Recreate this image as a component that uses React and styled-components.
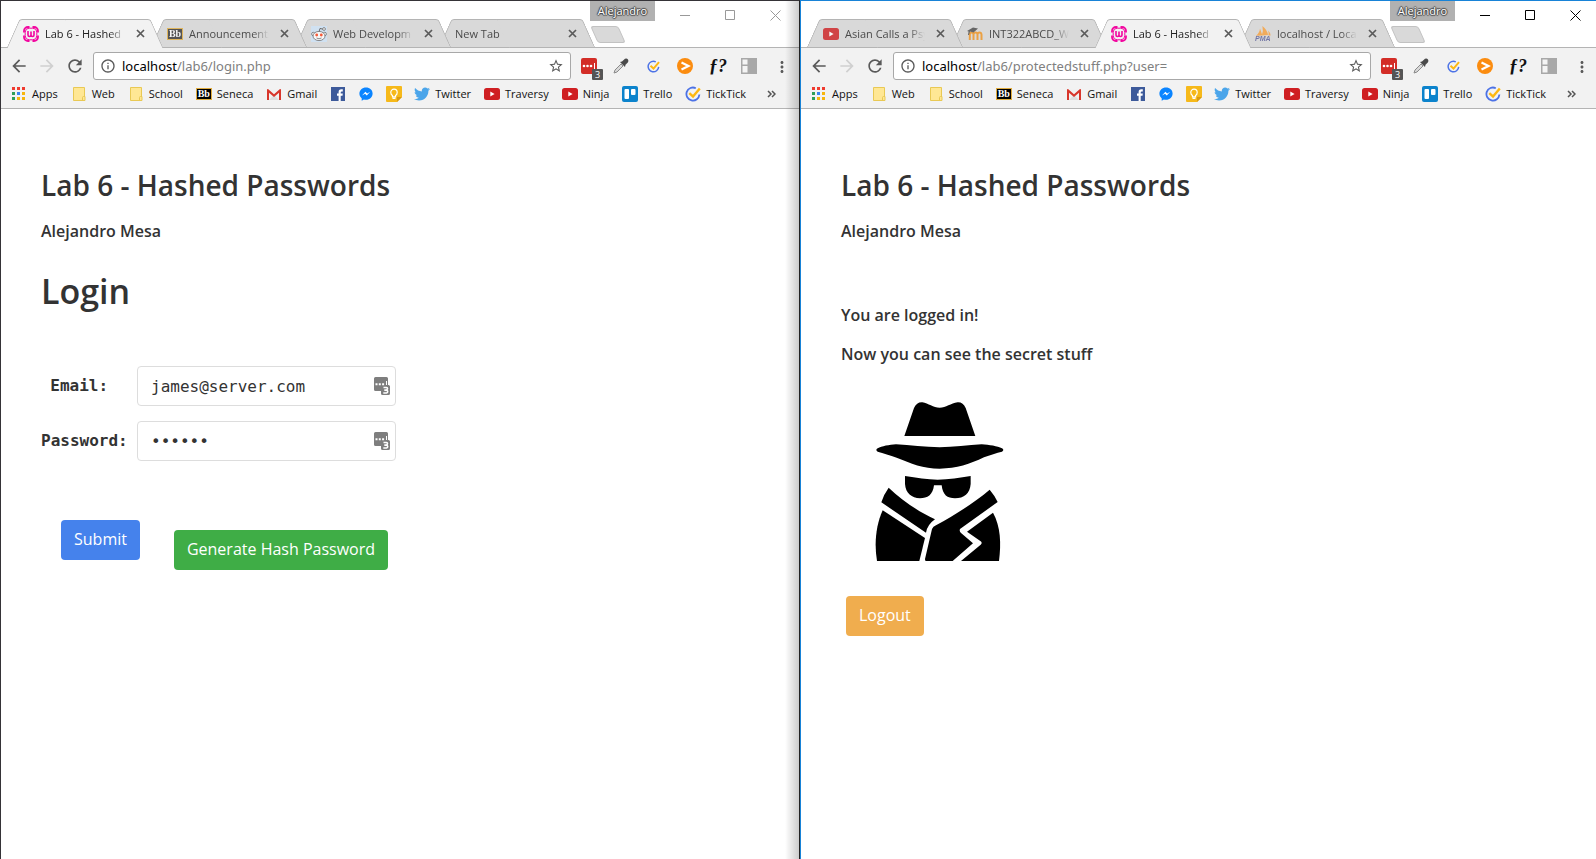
import React from 'react';
import styled, { createGlobalStyle, css } from 'styled-components';
import {
  MdArrowBack,
  MdArrowForward,
  MdRefresh,
  MdInfoOutline,
  MdStarBorder,
  MdMoreVert,
} from 'react-icons/md';
import { FaTwitter } from 'react-icons/fa';

const uiFont = '"Open Sans", "Noto Sans", sans-serif';
const monoFont = '"DejaVu Sans Mono", "Liberation Mono", monospace';

const GlobalStyle = createGlobalStyle`
  *, *::before, *::after { box-sizing: border-box; }
  body { margin: 0; background: #fff; color: #333; font-family: ${uiFont}; }
  button, input { font: inherit; }
  svg { display: block; flex: none; }
`;

const Desktop = styled.div`
  display: grid;
  grid-template-columns: 800fr 796fr;
  min-height: 100vh;
`;

const Window = styled.section`
  position: relative;
  overflow: hidden;
  min-width: 0;
  background: #fff;
  border-top: 1px solid #353337;
  border-left: 1px solid #353337;
  ${(p) =>
    p.$focused
      ? css`
          border-color: #1883d7;
        `
      : css`
          border-right: 1px solid #222;
          &::after {
            content: '';
            position: absolute;
            z-index: 20;
            inset: 0 0 0 auto;
            width: 14px;
            background: linear-gradient(to right, transparent, rgba(0, 0, 0, 0.2));
            pointer-events: none;
          }
        `}
`;

/* The focused window reaches a little past the edge of the screen. */
const Chrome = styled.header`
  position: relative;
  width: ${(p) => (p.$bleed ? 'calc(100% + 3px)' : '100%')};
  background: #f2f2f2;
`;

const TabStrip = styled.div`
  display: flex;
  align-items: flex-end;
  height: 47px;
  padding-left: 12px;
  background: #fff;
  border-bottom: 1px solid #b4b4b4;
`;

const Tab = styled.div`
  position: relative;
  isolation: isolate;
  z-index: ${(p) => (p.$active ? 10 : 5 - p.$order)};
  display: flex;
  align-items: center;
  flex: none;
  width: 144px;
  height: 29px;
  margin-bottom: -1px;
  padding: 0 12px 0 10px;
  color: ${(p) => (p.$active ? '#222' : '#4b4b4b')};
  font-size: 11px;
  line-height: 16px;

  &::before,
  &::after {
    content: '';
    position: absolute;
    z-index: -1;
    inset: 0 auto 0 0;
    width: 60%;
    background: ${(p) => (p.$active ? '#f2f2f2' : '#d9d9d9')};
    border: 1px solid #b4b4b4;
    border-width: 1px 0 ${(p) => (p.$active ? 0 : 1)}px 1px;
    border-top-left-radius: 3px;
    transform: skewX(-24deg);
  }
  &::after {
    inset: 0 0 0 auto;
    border-left-width: 0;
    border-right-width: 1px;
    border-radius: 0 3px 0 0;
    transform: skewX(24deg);
  }
`;

const Favicon = styled.span`
  flex: none;
  width: 16px;
  margin-right: 6px;
  opacity: ${(p) => (p.$faded ? 0.8 : 1)};
`;

const TabTitle = styled.span`
  flex: 1;
  min-width: 0;
  overflow: hidden;
  white-space: nowrap;
  mask-image: linear-gradient(to right, #000 calc(100% - 16px), transparent);
`;

const PlainButton = styled.button`
  display: grid;
  place-items: center;
  flex: none;
  margin: 0;
  padding: 0;
  border: 0;
  background: none;
  color: inherit;
`;

const CloseTab = styled(PlainButton)`
  width: 9px;
  margin-left: 11px;
  color: #5a5a5a;
`;

const NewTab = styled(PlainButton)`
  width: 28px;
  height: 17px;
  margin: 0 0 4px 5px;
  background: #d9d9d9;
  border: 1px solid #c2c2c2;
  border-radius: 3px;
  transform: skewX(24deg);
`;

const Controls = styled.div`
  position: absolute;
  z-index: 12;
  top: 0;
  right: 0;
  display: flex;
  padding-right: 1px;
  color: ${(p) => (p.$focused ? '#000' : '#999')};
`;

const Profile = styled(PlainButton)`
  width: 65px;
  height: 20px;
  margin-right: 8px;
  background: #b1b1b1;
  color: #fff;
  font-size: 11px;
  line-height: 16px;
  text-shadow: 1px 0 1px #444, -1px 0 1px #444, 0 1px 1px #444, 0 -1px 1px #444;
`;

const ControlButton = styled(PlainButton)`
  width: 45px;
  height: 28px;
`;

const Toolbar = styled.div`
  display: flex;
  align-items: center;
  gap: 10px;
  padding: 4px 10px 0 10px;
`;

const Nav = styled.nav`
  display: flex;
  gap: 12px;
`;

const NavButton = styled(PlainButton)`
  width: 16px;
  height: 20px;
  color: ${(p) => (p.disabled ? '#d0d0d0' : '#5a5a5a')};
  svg {
    margin: 0 -2px;
  }
`;

const Omnibox = styled.form`
  display: flex;
  flex: 1;
  align-items: center;
  min-width: 0;
  height: 28px;
  padding: 0 6px;
  gap: 6px;
  background: #fff;
  border: 1px solid #a8a8a8;
  border-radius: 3px;
  color: #5a5a5a;
`;

const Address = styled.span`
  flex: 1;
  overflow: hidden;
  color: #808080;
  font-family: 'Noto Sans', sans-serif;
  font-size: 13px;
  line-height: 20px;
  white-space: nowrap;
`;

const Host = styled.span`
  color: #000;
`;

const Extensions = styled.div`
  display: flex;
  align-items: center;
  gap: 16px;
`;

const ExtensionButton = styled(PlainButton)`
  position: relative;
  width: 16px;
  height: 16px;
`;

const Count = styled.span`
  position: absolute;
  top: 11px;
  left: 11px;
  width: 11px;
  height: 11px;
  background: #555;
  border-radius: 1px;
  color: #fff;
  font-size: 9px;
  line-height: 11px;
`;

const Fx = styled.span`
  color: #111;
  font-family: 'Liberation Serif', serif;
  font-size: 18px;
  font-style: italic;
  font-weight: 700;
  line-height: 16px;
`;

const Bookmarks = styled.nav`
  display: flex;
  align-items: center;
  gap: 12px;
  height: 29px;
  padding: 0 23px 0 10px;
  border-bottom: 1px solid #b4b4b4;
`;

const Bookmark = styled.a`
  display: flex;
  align-items: center;
  flex: none;
  color: #111;
  font-size: 11px;
  line-height: 16px;
  text-decoration: none;
`;

const BookmarkName = styled.span`
  padding: 0 1px 0 5px;
`;

const More = styled(PlainButton)`
  margin-left: auto;
  color: #555;
`;

const Page = styled.main`
  padding: 59px 40px 40px;
`;

const Title = styled.h1`
  margin: 0 0 19px;
  font-size: 28px;
  font-weight: 600;
  line-height: 34px;
`;

const Line = styled.p`
  margin: 0 0 ${(p) => p.$after}px;
  font-size: 16px;
  font-weight: 600;
  line-height: 20px;
`;

const Heading = styled.h2`
  margin: 0 0 55px;
  font-size: 34px;
  font-weight: 600;
  line-height: 40px;
`;

const Fields = styled.div`
  display: grid;
  grid-template-columns: 86px 259px;
  gap: 15px 10px;
  align-items: center;
  font-family: ${monoFont};
  font-size: 16px;
  line-height: 20px;
`;

const Label = styled.label`
  font-weight: 700;
  text-align: center;
  white-space: nowrap;
`;

const Field = styled.div`
  position: relative;
`;

const Input = styled.input`
  width: 100%;
  height: 40px;
  padding: 1px 32px 0 13px;
  border: 1px solid #ddd;
  border-radius: 4px;
  background: #fff;
  color: #333;
`;

const FieldIcon = styled.span`
  position: absolute;
  top: 11px;
  right: 6px;
`;

const Actions = styled.div`
  display: flex;
  align-items: flex-start;
  gap: 34px;
  margin: 59px 0 0 20px;
`;

const tones = { primary: '#4582ec', success: '#3fad46', warning: '#f0ad4e' };

const Button = styled.button`
  height: 40px;
  padding: 0 13px 2px;
  border: 0;
  border-radius: 4px;
  background: ${(p) => tones[p.$tone]};
  color: #fff;
  font-size: 16px;
  line-height: 20px;
`;

const LoweredButton = styled(Button)`
  margin-top: 10px;
`;

const LogoutButton = styled(Button)`
  margin-left: 5px;
`;

const Portrait = styled.svg`
  margin: 38px 0 34px 34px;
`;

/* ---------- icons ---------- */

const Icon = (props) => <svg width="16" height="16" viewBox="0 0 16 16" aria-hidden="true" {...props} />;

const WampIcon = () => (
  <Icon fill="none" stroke="#f2069f">
    <path d="M6.5 1H5A4 4 0 0 0 1 5v1.500M9.500 1H11a4 4 0 0 1 4 4v1.500M1 9.500V11a4 4 0 0 0 4 4h1.500M15 9.500V11a4 4 0 0 1-4 4H9.500" strokeWidth="1.800" />
    <rect x="2.200" y="2.200" width="11.600" height="11.600" rx="4" strokeWidth="1" />
    <path d="M5 5v4a1.500 1.500 0 0 0 3 0V5.500V9a1.500 1.500 0 0 0 3 0V5" strokeWidth="1.600" />
  </Icon>
);

const Badge = styled.span`
  display: block;
  width: 16px;
  height: 12px;
  border: 1px solid #e0ac3e;
  background: ${(p) => (p.$faded ? '#333' : '#000')};
  color: #fff;
  font-family: 'Liberation Serif', serif;
  font-size: 10px;
  font-weight: 700;
  line-height: 10px;
  text-align: center;
`;

const RedditIcon = () => (
  <Icon>
    <rect width="16" height="16" fill="#cee3f8" />
    <path d="M8 6l1-3.600 3 .800" fill="none" stroke="#555" />
    <g fill="#fff" stroke="#555" strokeWidth=".8">
      <circle cx="13" cy="3" r="1.400" />
      <circle cx="2.300" cy="8" r="1.700" />
      <circle cx="13.700" cy="8" r="1.700" />
      <ellipse cx="8" cy="10" rx="6" ry="4.600" />
    </g>
    <circle cx="5.700" cy="9" r="1.400" fill="#ff3b12" />
    <circle cx="10.300" cy="9" r="1.400" fill="#ff3b12" />
    <path d="M5.500 12q2.500 1.600 5 0" fill="none" stroke="#555" strokeWidth=".8" />
  </Icon>
);

const YoutubeIcon = () => (
  <Icon>
    <rect y="2" width="16" height="12" rx="2.500" fill="#cf1f22" />
    <path d="M6.300 5.400v5.200L10.600 8z" fill="#fff" />
  </Icon>
);

const MoodleIcon = () => (
  <Icon>
    <path d="M2.800 14V8.500q0-2 1.800-2t1.900 2V14M6.500 8.500q0-2 2-2t2 2V14M10.500 8.500q.200-2 2-2t2 2V14" fill="none" stroke="#f0941f" strokeWidth="2" />
    <path d="M0 5L6 1.500l5 1-4.500 4L3 5.500l-1 3.500H1l.600-3.500z" fill="#4a4a4a" />
  </Icon>
);

const PmaText = styled.text`
  font-family: 'Liberation Sans', sans-serif;
  font-size: 7px;
  font-style: italic;
  font-weight: 700;
`;

const PmaIcon = () => (
  <Icon overflow="visible">
    <path d="M1 9.800Q4.500 7 5 2.500l2.400 7zM6.800 9.400Q8.600 5 7.400 0q5 4 5.600 9zM13.400 9.400q.600-3-.400-5 2.400 2 2.600 5z" fill="#f7a03c" />
    <PmaText x="0" y="15" fill="#5a5f99">PMA</PmaText>
  </Icon>
);

const AppsIcon = () => {
  const colors = ['#ef3b2f', '#ef3b2f', '#ef3b2f', '#2f9e57', '#3b84f0', '#f7b50c', '#2f9e57', '#f7b50c', '#f7b50c'];
  return (
    <Icon>
      {colors.map((c, i) => (
        <rect key={i} x={1 + (i % 3) * 5} y={1 + Math.floor(i / 3) * 5} width="3" height="3" fill={c} />
      ))}
    </Icon>
  );
};

const FolderIcon = () => (
  <Icon>
    <path d="M2.500 1.500h11v9h.500v4h-11.500z" fill="#ffe794" stroke="#e9c954" />
    <path d="M11.500 14.500v-3q0-1 1-1h1.500" fill="none" stroke="#e9c954" />
  </Icon>
);

const GmailIcon = () => (
  <Icon>
    <path d="M1 3h14v11H1z" fill="#f1f1f1" />
    <path d="M3 14l5-5 5 5z" fill="#dedede" />
    <path d="M1 14V3.500Q1 3 2 3l6 5.300L14 3q1 0 1 .500V14h-2V6.700L8 11 3 6.700V14z" fill="#d8362b" />
  </Icon>
);

const FacebookIcon = () => (
  <Icon>
    <rect x="1" y="1" width="14" height="14" fill="#3d5a9a" />
    <path d="M8.600 15V9.800H7V7.500h1.600V6q0-2.700 2.700-2.700h1.500v2.200h-1.100q-1 0-1 1v1h2.100l-.300 2.300h-1.800V15z" fill="#fff" />
  </Icon>
);

const MessengerIcon = () => (
  <Icon>
    <path d="M8 1.500c-3.800 0-6.600 2.700-6.600 6 0 1.900.9 3.600 2.300 4.700v2.600l2.200-1.300q1 .3 2.100.3c3.800 0 6.600-2.800 6.600-6.300s-2.800-6-6.600-6z" fill="#0a84ff" />
    <path d="M4 9.400L7.400 5.800l1.800 1.700 3-1.700L8.800 9.400 7 7.700z" fill="#fff" />
  </Icon>
);

const KeepIcon = () => (
  <Icon>
    <path d="M1 0h14q1 0 1 1v10l-5 5H1q-1 0-1-1V1q0-1 1-1z" fill="#f6b91a" />
    <path d="M16 11l-5 5v-5z" fill="#d99a12" />
    <path d="M6.500 9.600Q4.800 8.400 4.800 6.400a3.200 3.200 0 0 1 6.400 0q0 2-1.700 3.200v1.200h-3zM6.500 12.300h3" fill="none" stroke="#fff" strokeWidth="1.200" />
  </Icon>
);

const TrelloIcon = () => (
  <Icon>
    <rect width="16" height="16" rx="2" fill="#0c83cc" />
    <rect x="2.500" y="3" width="4.500" height="10" rx="1" fill="#fff" />
    <rect x="9" y="3" width="4.500" height="6" rx="1" fill="#fff" />
  </Icon>
);

const TickTickIcon = ({ size = 16 }) => (
  <Icon width={size} height={size}>
    <path d="M10.800 2.200A6.500 6.500 0 1 0 14.400 8.500" fill="none" stroke="#4c72e6" strokeWidth="1.800" />
    <path d="M4.300 7.200L8 10.500l6.800-8" fill="none" stroke="#fdb812" strokeWidth="2.400" />
  </Icon>
);

const LastPassIcon = () => (
  <Icon>
    <rect width="16" height="16" rx="2" fill="#d32d27" />
    <g fill="#fff">
      <circle cx="3" cy="8" r="1.300" />
      <circle cx="6.500" cy="8" r="1.300" />
      <circle cx="10" cy="8" r="1.300" />
      <rect x="13" y="5" width="1" height="6" />
    </g>
  </Icon>
);

const DropperIcon = () => (
  <Icon>
    <path d="M1 15l1-3 6-6 2 2-6 6z" fill="#d8d8d8" stroke="#8a8a8a" />
    <path d="M7 4l2-.500L12 .800Q14 .200 15 1.500 16 3 14.800 4.500L12.500 6.800 12 9z" fill="#4a4a4a" />
  </Icon>
);

const OrangeIcon = () => (
  <Icon>
    <circle cx="8" cy="8" r="8" fill="#fb8c0f" />
    <path d="M4.500 4.500L11.500 8l-7 3.500" fill="none" stroke="#fff" strokeWidth="2.200" />
  </Icon>
);

const PanelIcon = () => (
  <Icon>
    <rect width="16" height="16" fill="#a8a8a8" />
    <path d="M1.500 1.500h5v5h-5zM1.500 8h5v6.500h-5z" fill="#f4f4f4" />
  </Icon>
);

const CrossIcon = () => (
  <svg width="9" height="9" viewBox="0 0 9 9" aria-hidden="true">
    <path d="M1 1l7 7M8 1L1 8" stroke="currentColor" strokeWidth="1.700" />
  </svg>
);

const WindowGlyph = ({ d }) => (
  <svg width="11" height="11" viewBox="0 0 11 11" fill="none" stroke="currentColor" aria-hidden="true">
    <path d={d} />
  </svg>
);

const VaultIcon = () => (
  <svg width="16" height="18" viewBox="0 0 16 18" aria-hidden="true">
    <path d="M1.500 0h11Q14 0 14 1.500V8h.500Q16 8 16 9.500v7q0 1.500-1.500 1.500h-6Q7 18 7 16.500V14H1.500Q0 14 0 12.500v-11Q0 0 1.500 0z" fill="#7e7e7e" />
    <path d="M1.500 6.200h2v2h-2zM4.800 6.200h2v2h-2zM8.100 6.200h2v2h-2zM12 4h1v4h-1z" fill="#fff" />
    <path d="M9.500 10.500h3q1 0 1 1t-1 1.500q1.200.4 1.200 1.600T12.500 16H9.300M10.300 13.100h2.200" fill="none" stroke="#fff" strokeWidth="1.600" />
  </svg>
);

const Spy = () => (
  <Portrait width="129" height="160" viewBox="105 66 387 480" role="img" aria-label="Spy">
    <path d="M193 168L222 84Q230 66 247 67C265 70 280 83 299 83C318 83 332 70 353 67Q369 66 377 84L406 168Z" />
    <path d="M113 205C125 199 148 194 168 193C210 196 255 201 299 202C340 201 385 196 425 193C448 194 472 199 486 205Q494 210 486 215C470 219 450 225 432 232C390 252 350 266 299 266C250 266 212 250 170 233C150 226 130 220 113 215Q105 210 113 205Z" />
    <path d="M195 288C230 294 262 298 293 299C325 298 360 294 392 288L392 312C390 340 372 355 345 355C322 355 308 345 305 316L282 316C279 345 262 355 240 355C215 354 197 340 195 312Z" />
    <path d="M146 323C185 360 235 395 285 418Q262 434 258 458L124 367Q130 345 146 323Z" />
    <path d="M128 391L255 474L238 543L111 543C102 490 108 435 128 391Z" />
    <path d="M449 329Q463 345 473 366L360 447Q357 455 364 460L399 490L338 543L257 543Q255 542 255 537L276 447Q279 440 288 436C345 405 400 370 449 329Z" />
    <path d="M459 398C482 440 484 490 477 543L363 543L422 494Q428 489 422 484L381 455Z" />
  </Portrait>
);

/* ---------- data ---------- */

const bookmarks = [
  ['Apps', <AppsIcon />],
  ['Web', <FolderIcon />],
  ['School', <FolderIcon />],
  ['Seneca', <Badge>Bb</Badge>],
  ['Gmail', <GmailIcon />],
  ['', <FacebookIcon />, 'Facebook'],
  ['', <MessengerIcon />, 'Messenger'],
  ['', <KeepIcon />, 'Keep'],
  ['Twitter', <FaTwitter size={16} color="#4ba5ea" />],
  ['Traversy', <YoutubeIcon />],
  ['Ninja', <YoutubeIcon />],
  ['Trello', <TrelloIcon />],
  ['TickTick', <TickTickIcon />],
];

const leftTabs = [
  { title: 'Lab 6 - Hashed', icon: <WampIcon />, active: true },
  { title: 'Announcements', icon: <Badge $faded>Bb</Badge> },
  { title: 'Web Developm', icon: <RedditIcon /> },
  { title: 'New Tab' },
];

const rightTabs = [
  { title: 'Asian Calls a Psy', icon: <YoutubeIcon /> },
  { title: 'INT322ABCD_W', icon: <MoodleIcon /> },
  { title: 'Lab 6 - Hashed', icon: <WampIcon />, active: true },
  { title: 'localhost / Local', icon: <PmaIcon /> },
];

function BrowserWindow({ tabs, path, focused, children }) {
  return (
    <Window $focused={focused}>
      <Chrome $bleed={focused}>
        <TabStrip>
          {tabs.map((tab, i) => (
            <Tab key={i} $active={tab.active} $order={i}>
              {tab.icon && <Favicon $faded={!tab.active}>{tab.icon}</Favicon>}
              <TabTitle>{tab.title}</TabTitle>
              <CloseTab aria-label="Close tab">
                <CrossIcon />
              </CloseTab>
            </Tab>
          ))}
          <NewTab aria-label="New tab" />
        </TabStrip>
        <Controls $focused={focused}>
          <Profile>Alejandro</Profile>
          <ControlButton aria-label="Minimize">
            <WindowGlyph d="M0 5.500h10" />
          </ControlButton>
          <ControlButton aria-label="Maximize">
            <WindowGlyph d="M.500 .500h9v9h-9z" />
          </ControlButton>
          <ControlButton aria-label="Close">
            <WindowGlyph d="M.500 .500l10 10M10.500 .500l-10 10" />
          </ControlButton>
        </Controls>
        <Toolbar>
          <Nav>
            <NavButton aria-label="Back">
              <MdArrowBack size={20} />
            </NavButton>
            <NavButton aria-label="Forward" disabled>
              <MdArrowForward size={20} />
            </NavButton>
            <NavButton aria-label="Reload">
              <MdRefresh size={20} />
            </NavButton>
          </Nav>
          <Omnibox>
            <MdInfoOutline size={16} />
            <Address>
              <Host>localhost</Host>
              {path}
            </Address>
            <MdStarBorder size={16} />
          </Omnibox>
          <Extensions>
            <ExtensionButton aria-label="Password manager">
              <LastPassIcon />
              <Count>3</Count>
            </ExtensionButton>
            <ExtensionButton aria-label="Color picker">
              <DropperIcon />
            </ExtensionButton>
            <ExtensionButton aria-label="Tasks">
              <TickTickIcon size={13} />
            </ExtensionButton>
            <ExtensionButton aria-label="Run">
              <OrangeIcon />
            </ExtensionButton>
            <ExtensionButton>
              <Fx>ƒ?</Fx>
            </ExtensionButton>
            <ExtensionButton aria-label="Panels">
              <PanelIcon />
            </ExtensionButton>
            <ExtensionButton aria-label="Menu">
              <MdMoreVert size={18} color="#5a5a5a" />
            </ExtensionButton>
          </Extensions>
        </Toolbar>
        <Bookmarks>
          {bookmarks.map(([name, icon, label], i) => (
            <Bookmark key={i} href="#" aria-label={label}>
              {icon}
              {name && <BookmarkName>{name}</BookmarkName>}
            </Bookmark>
          ))}
          <More aria-label="More bookmarks">
            <svg width="9" height="8" viewBox="0 0 9 8" fill="none" stroke="currentColor" strokeWidth="1.500">
              <path d="M1 1l3 3-3 3M5 1l3 3-3 3" />
            </svg>
          </More>
        </Bookmarks>
      </Chrome>
      <Page>{children}</Page>
    </Window>
  );
}

export default function App() {
  return (
    <>
      <GlobalStyle />
      <Desktop>
        <BrowserWindow tabs={leftTabs} path="/lab6/login.php">
          <Title>Lab 6 - Hashed Passwords</Title>
          <Line $after={30}>Alejandro Mesa</Line>
          <Heading>Login</Heading>
          <Fields>
            <Label htmlFor="email">Email:&nbsp;</Label>
            <Field>
              <Input id="email" type="text" defaultValue="james@server.com" />
              <FieldIcon>
                <VaultIcon />
              </FieldIcon>
            </Field>
            <Label htmlFor="password">Password:</Label>
            <Field>
              <Input id="password" type="password" defaultValue="secret" />
              <FieldIcon>
                <VaultIcon />
              </FieldIcon>
            </Field>
          </Fields>
          <Actions>
            <Button $tone="primary">Submit</Button>
            <LoweredButton $tone="success">Generate Hash Password</LoweredButton>
          </Actions>
        </BrowserWindow>
        <BrowserWindow tabs={rightTabs} path="/lab6/protectedstuff.php?user=" focused>
          <Title>Lab 6 - Hashed Passwords</Title>
          <Line $after={64}>Alejandro Mesa</Line>
          <Line $after={19}>You are logged in!</Line>
          <Line $after={0}>Now you can see the secret stuff</Line>
          <Spy />
          <LogoutButton $tone="warning">Logout</LogoutButton>
        </BrowserWindow>
      </Desktop>
    </>
  );
}
